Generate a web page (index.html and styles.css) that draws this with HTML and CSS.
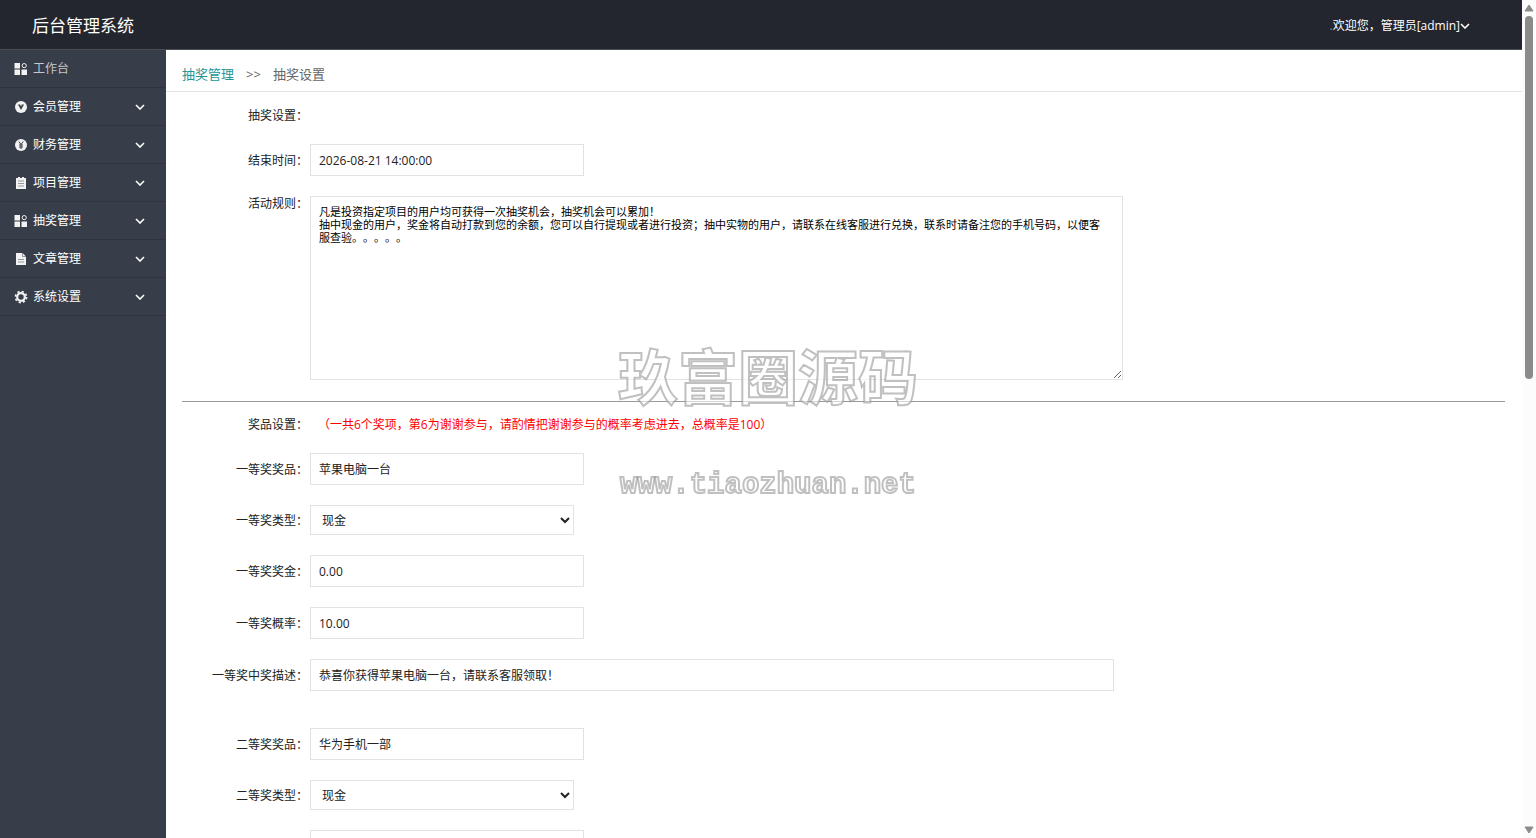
FILE: index.html
```html
<!DOCTYPE html>
<html lang="zh-CN">
<head>
    <meta charset="UTF-8">
    <meta name="viewport" content="width=device-width, initial-scale=1.0">
    <title>后台管理系统</title>
    <link rel="stylesheet" href="styles.css">
</head>
<body>
    <svg class="sprite" aria-hidden="true">
        <symbol id="arrow" viewBox="0 0 10 6"><path d="M1 1l4 4 4-4" fill="none" stroke="currentColor" stroke-width="1.6"/></symbol>
        <symbol id="grid" viewBox="0 0 14 14">
            <path d="M.5 1H6v5.500H.5zM.5 7.500H6V13H.5zM7.500 7.500H13V13H7.500z" fill="currentColor"/>
            <circle cx="10.200" cy="3.600" r="2.100" fill="none" stroke="currentColor"/>
        </symbol>
        <symbol id="vip" viewBox="0 0 14 14">
            <circle cx="7" cy="7" r="6" fill="currentColor"/>
            <path d="M4 4.500h6L7 10z" fill="#383e49"/><path d="M6 4.200h2L7 6.500z" fill="currentColor"/>
        </symbol>
        <symbol id="money" viewBox="0 0 14 14">
            <circle cx="7" cy="7" r="6" fill="currentColor"/>
            <path d="M4.800 3.500L7 6.500l2.200-3M7 6.500V11M5 7h4M5 9h4" fill="none" stroke="#383e49"/>
        </symbol>
        <symbol id="list" viewBox="0 0 14 14">
            <path d="M2 2h2V1h2v1h2V1h2v1h2v11H2z" fill="currentColor"/>
            <path d="M4 5h6M4 7.500h6M4 10h6" stroke="#383e49" stroke-width=".5"/>
        </symbol>
        <symbol id="file" viewBox="0 0 14 14">
            <path d="M2 1h6.500L12 4.500V13H2z" fill="currentColor"/>
            <path d="M8.500 1v3.500H12M4 7.500h6M4 10h6" fill="none" stroke="#383e49" stroke-width=".5"/>
        </symbol>
        <symbol id="gear" viewBox="0 0 14 14">
            <circle cx="7" cy="7" r="3.800" fill="none" stroke="currentColor" stroke-width="2.200"/>
            <circle cx="7" cy="7" r="5.500" fill="none" stroke="currentColor" stroke-width="1.800" stroke-dasharray="2.160 2.160"/>
        </symbol>
    </svg>

    <div class="app">
        <header class="header">
            <h1 class="logo">后台管理系统</h1>
            <div class="user">
                <span class="dot">.</span>
                <button class="user-btn" type="button">欢迎您，管理员[admin]<svg class="arrow"><use href="#arrow"/></svg></button>
            </div>
        </header>

        <div class="body">
            <nav class="side">
                <a class="item current" href="#"><svg class="icon"><use href="#grid"/></svg>工作台</a>
                <a class="item" href="#"><svg class="icon"><use href="#vip"/></svg>会员管理<svg class="arrow"><use href="#arrow"/></svg></a>
                <a class="item" href="#"><svg class="icon"><use href="#money"/></svg>财务管理<svg class="arrow"><use href="#arrow"/></svg></a>
                <a class="item" href="#"><svg class="icon"><use href="#list"/></svg>项目管理<svg class="arrow"><use href="#arrow"/></svg></a>
                <a class="item" href="#"><svg class="icon"><use href="#grid"/></svg>抽奖管理<svg class="arrow"><use href="#arrow"/></svg></a>
                <a class="item" href="#"><svg class="icon"><use href="#file"/></svg>文章管理<svg class="arrow"><use href="#arrow"/></svg></a>
                <a class="item" href="#"><svg class="icon"><use href="#gear"/></svg>系统设置<svg class="arrow"><use href="#arrow"/></svg></a>
            </nav>

            <main class="main">
                <div class="crumb">
                    <a href="#">抽奖管理</a><span>&gt;&gt;</span><span>抽奖设置</span>
                </div>

                <form class="form">
                    <div class="group">
                        <div class="row"><span class="label">抽奖设置：</span></div>
                        <div class="row">
                            <label class="label" for="end">结束时间：</label>
                            <input class="input" id="end" type="text" value="2026-08-21 14:00:00">
                        </div>
                        <div class="row top">
                            <label class="label" for="rule">活动规则：</label>
                            <textarea class="textarea" id="rule">凡是投资指定项目的用户均可获得一次抽奖机会，抽奖机会可以累加！
抽中现金的用户，奖金将自动打款到您的余额，您可以自行提现或者进行投资；抽中实物的用户，请联系在线客服进行兑换，联系时请备注您的手机号码，以便客服查验。。。。。</textarea>
                        </div>
                    </div>

                    <hr class="line">

                    <div class="group">
                        <div class="row">
                            <span class="label">奖品设置：</span>
                            <span class="tip">（一共6个奖项，第6为谢谢参与，请酌情把谢谢参与的概率考虑进去，总概率是100）</span>
                        </div>
                        <div class="row">
                            <label class="label" for="name1">一等奖奖品：</label>
                            <input class="input" id="name1" type="text" value="苹果电脑一台">
                        </div>
                        <div class="row">
                            <label class="label" for="type1">一等奖类型：</label>
                            <select class="select" id="type1"><option>现金</option><option>实物</option></select>
                        </div>
                        <div class="row">
                            <label class="label" for="money1">一等奖奖金：</label>
                            <input class="input" id="money1" type="text" value="0.00">
                        </div>
                        <div class="row">
                            <label class="label" for="rate1">一等奖概率：</label>
                            <input class="input" id="rate1" type="text" value="10.00">
                        </div>
                        <div class="row">
                            <label class="label" for="desc1">一等奖中奖描述：</label>
                            <input class="input long" id="desc1" type="text" value="恭喜你获得苹果电脑一台，请联系客服领取！">
                        </div>
                    </div>

                    <div class="group next">
                        <div class="row">
                            <label class="label" for="name2">二等奖奖品：</label>
                            <input class="input" id="name2" type="text" value="华为手机一部">
                        </div>
                        <div class="row">
                            <label class="label" for="type2">二等奖类型：</label>
                            <select class="select" id="type2"><option>现金</option><option>实物</option></select>
                        </div>
                        <div class="row">
                            <label class="label" for="money2">二等奖奖金：</label>
                            <input class="input" id="money2" type="text" value="0.00">
                        </div>
                    </div>
                </form>
            </main>
        </div>
    </div>

    <div class="scrollbar" aria-hidden="true">
        <svg class="tri" viewBox="0 0 10 8"><path d="M5 1l4 6H1z" fill="#8b8b8b" stroke="#8b8b8b" stroke-linejoin="round"/></svg>
        <div class="track"><div class="thumb"></div></div>
        <svg class="tri" viewBox="0 0 10 8"><path d="M5 7l4-6H1z" fill="#8b8b8b" stroke="#8b8b8b" stroke-linejoin="round"/></svg>
    </div>

    <div class="watermark">
        <div class="wm-name">玖富圈源码</div>
        <div class="wm-url">www.tiaozhuan.net</div>
    </div>
</body>
</html>
```
FILE: styles.css
```css
* {box-sizing: border-box;}
body {
    margin: 0;
    display: flex;
    height: 100vh;
    overflow: hidden;
    font-family: 'Open Sans', 'Noto Sans CJK SC', sans-serif;
    font-size: 12px;
    line-height: 16px;
    color: #222;
    background: white;
}
a {text-decoration: none; color: inherit;}
input, select, button {font: inherit; color: inherit;}
.sprite {display: none;}
.app {
    flex: 1;
    min-width: 0;
    display: flex;
    flex-direction: column;
}

/* header */
.header {
    flex: none;
    display: flex;
    justify-content: space-between;
    align-items: center;
    height: 50px;
    padding: 2px 52px 0 32px;
    background: #23262e;
    border-bottom: 1px solid #4a4c53;
    color: white;
}
.logo {margin: 0; font-size: 17px; font-weight: normal; line-height: 24px;}
.user {display: flex;}
.dot {color: #888;}
.user-btn {
    display: flex;
    align-items: center;
    padding: 0;
    border: none;
    background: none;
    cursor: pointer;
}
.arrow {width: 10px; height: 6px;}

/* sidebar */
.body {flex: 1; min-height: 0; display: flex;}
.side {flex: none; width: 166px; background: #383e49;}
.item {
    display: flex;
    align-items: center;
    height: 38px;
    padding: 1px 21px 0 14px;
    border-bottom: 1px solid #2f343d;
    color: white;
}
.item .arrow {margin-left: auto;}
.current {color: #c5c7cb;}
.icon {width: 14px; height: 14px; margin-right: 5px; color: #f2f2f2;}

/* content */
.main {flex: 1; min-width: 0; overflow: hidden;}
.crumb {
    display: flex;
    align-items: center;
    gap: 12px;
    height: 42px;
    padding: 6px 16px 0;
    border-bottom: 1px solid #e2e2e2;
    font-size: 13px;
    color: #666;
}
.crumb a {color: #1e9494;}
.form {padding: 14px 17px 0 16px;}
.group {display: flex; flex-direction: column; gap: 20px;}
.next {margin-top: 37px;}
.row {display: flex; align-items: center; gap: 2px;}
.top {align-items: flex-start;}
.label, .tip {padding-top: 2px;}
.label {flex: none; width: 126px; text-align: right;}
.top .label {padding-top: 0;}
.input, .select, .textarea {
    min-width: 0;
    border: 1px solid #e2e2e2;
    border-radius: 0;
    background: white;
    outline: none;
}
.input {width: 274px; height: 32px; padding: 0 8px;}
.select {width: 264px; height: 30px; padding: 0 0 0 7px;}
.long {width: 804px;}
.textarea {
    width: 813px;
    height: 184px;
    padding: 8px 16px 8px 8px;
    font-family: 'Noto Sans CJK SC', sans-serif;
    font-size: 11px;
    line-height: 13px;
    text-spacing-trim: space-all;
    color: black;
}
.tip {padding-left: 8px; color: red;}
.line {
    height: 1px;
    margin: 21px 0 13px;
    border: none;
    background: #999;
}

/* scrollbar */
.scrollbar {
    flex: none;
    display: flex;
    flex-direction: column;
    align-items: center;
    gap: 4px;
    width: 14px;
    padding: 4px 0;
    background: #fcfcfc;
}
.tri {width: 10px; height: 8px;}
.track {flex: 1;}
.thumb {width: 8px; height: 45%; border-radius: 4px; background: #8b8b8b;}

/* watermark over the whole page */
.watermark {
    position: fixed;
    top: 342px;
    left: 0;
    right: 0;
    text-align: center;
    color: rgba(255, 255, 255, 0.6);
    -webkit-text-stroke: 2px rgba(150, 150, 150, 0.6);
    pointer-events: none;
}
.wm-name {
    font-family: 'Noto Sans CJK SC', sans-serif;
    font-size: 60px;
    font-weight: bold;
    line-height: 64px;
}
.wm-url {
    margin-top: 60px;
    font-family: 'Liberation Mono', monospace;
    font-size: 29px;
    font-weight: bold;
    line-height: 40px;
}
```
